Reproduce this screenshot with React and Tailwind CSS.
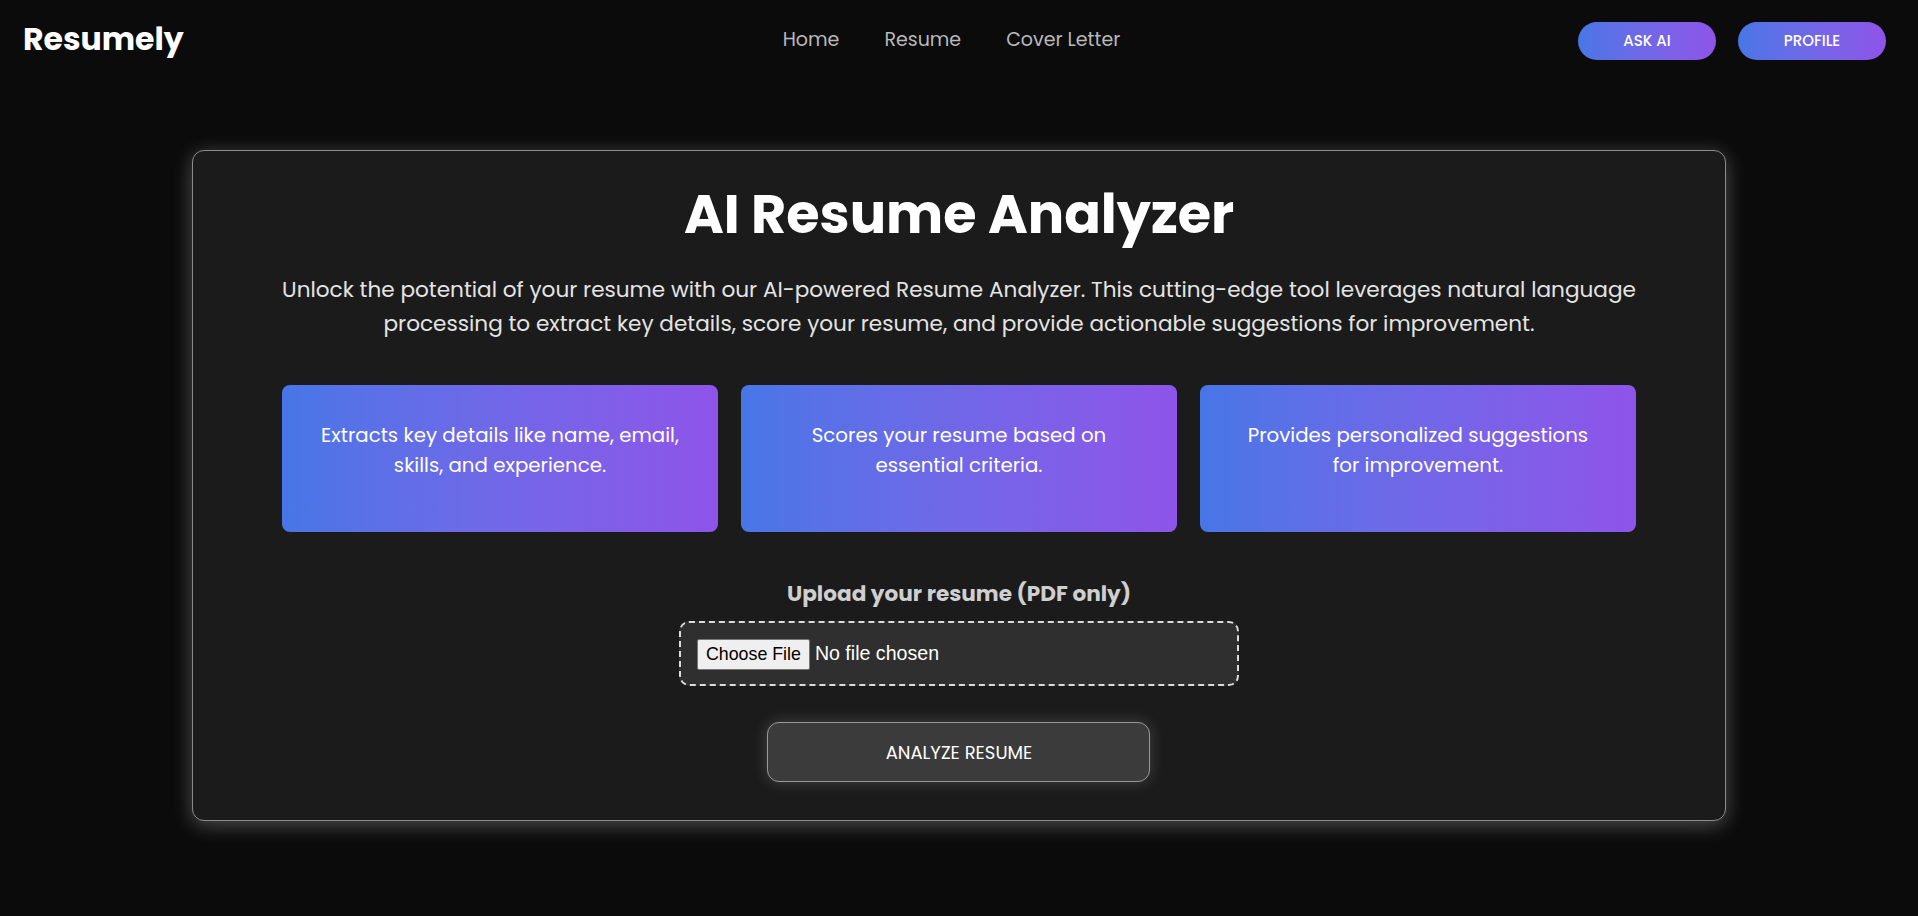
import React from 'react';

const font = { fontFamily: '"Poppins", "Inter", "Open Sans", sans-serif' };

const features = [
  ['Extracts key details like name, email,', 'skills, and experience.'],
  ['Scores your resume based on', 'essential criteria.'],
  ['Provides personalized suggestions', 'for improvement.'],
];

const Header = () => (
  <header className="h-[80px] flex items-center pl-[23px] pr-[32px]">
    <div className="flex-1">
      <span className="text-[31.5px] font-bold text-white">Resumely</span>
    </div>
    <nav className="flex items-center gap-[45px] text-[19px] text-[#b9b9b9] mr-[6px]">
      <a href="#">Home</a>
      <a href="#">Resume</a>
      <a href="#">Cover Letter</a>
    </nav>
    <div className="flex-1 flex justify-end gap-[22px] pt-[2px]">
      <button className="w-[138px] h-[38px] rounded-full bg-linear-to-r from-[#4776E6] to-[#8E54E9] text-white text-[15px] font-medium">
        ASK AI
      </button>
      <button className="w-[148px] h-[38px] rounded-full bg-linear-to-r from-[#4776E6] to-[#8E54E9] text-white text-[15px] font-medium">
        PROFILE
      </button>
    </div>
  </header>
);

export default function App() {
  return (
    <div className="min-h-screen bg-[#0b0b0b] pb-[95px]" style={font}>
      <Header />
      <main className="mt-[70px] flex justify-center">
        <div className="w-[80%] bg-[#1b1b1b] border border-[#8c8c8c] rounded-[12px] shadow-[0_4px_20px_rgba(255,255,255,0.28)] pt-[30px] pb-[38px] flex flex-col items-center">
          <h1 className="text-[54px] leading-[67px] font-bold text-white">AI Resume Analyzer</h1>
          <p className="mt-[25px] text-[21.6px] leading-[34px] text-[#e4e4e4] text-center">
            Unlock the potential of your resume with our AI-powered Resume Analyzer. This cutting-edge tool leverages natural language
            <br />
            processing to extract key details, score your resume, and provide actionable suggestions for improvement.
          </p>
          <div className="mt-[44px] w-[1354px] grid grid-cols-3 gap-[23px]">
            {features.map((f, i) => (
              <div
                key={i}
                className="h-[147px] rounded-[8px] bg-linear-to-r from-[#4776E6] to-[#8E54E9] pt-[35px] px-6 text-center text-[19.8px] leading-[30px] text-white"
              >
                {f[0]}
                <br />
                {f[1]}
              </div>
            ))}
          </div>
          <label className="mt-[47px] text-[21.6px] leading-[30px] font-bold text-[#cfcfcf]">
            Upload your resume (PDF only)
          </label>
          <div className="mt-[12px] w-[560px] h-[65px] border-2 border-dashed border-[#dcdcdc] rounded-[10px] bg-[#2f2f2f] px-4 pt-[2px] flex items-center">
            <input
              type="file"
              accept="application/pdf"
              className="text-[19.6px] text-white file:text-[17.8px] file:text-black file:bg-[#efefef] file:border file:border-[#767676] file:rounded-[2px] file:px-[8px] file:py-[1px] file:mr-[5px]"
              style={{ fontFamily: '"Liberation Sans", Arial, sans-serif' }}
            />
          </div>
          <button className="mt-[36px] w-[383px] h-[60px] rounded-[12px] bg-[#3b3b3b] border border-[#9a9a9a] text-white text-[18px] shadow-[0_0_15px_rgba(255,255,255,0.18)]">
            ANALYZE RESUME
          </button>
        </div>
      </main>
    </div>
  );
}
